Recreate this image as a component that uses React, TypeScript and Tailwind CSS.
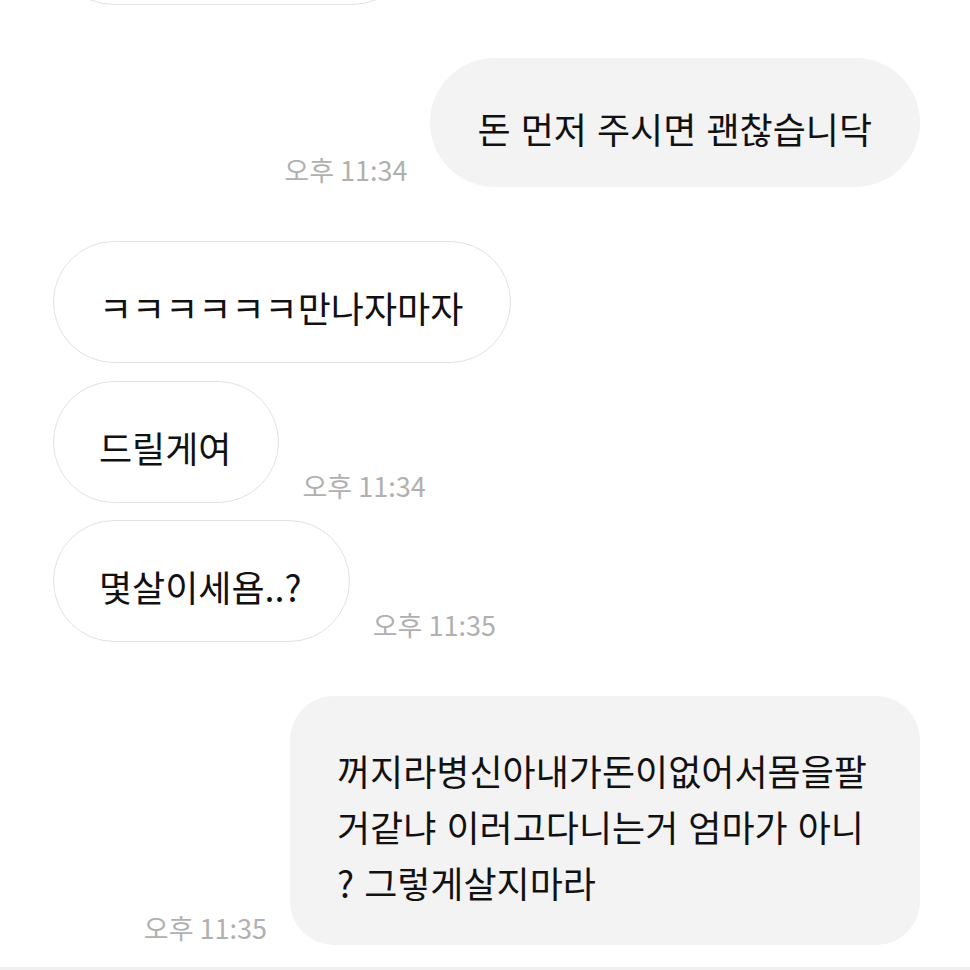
import React from 'react';

type Msg = {
  id: number;
  side: 'me' | 'them';
  lines: string[];
  time?: string;
  mt: string;
  w?: string;
};

const messages: Msg[] = [
  { id: 1, side: 'me', lines: ['돈 먼저 주시면 괜찮습니닥'], time: '오후 11:34', mt: 'mt-[53px]' },
  { id: 2, side: 'them', lines: ['ㅋㅋㅋㅋㅋㅋ만나자마자'], mt: 'mt-[54px]' },
  { id: 3, side: 'them', lines: ['드릴게여'], time: '오후 11:34', mt: 'mt-[18px]' },
  { id: 4, side: 'them', lines: ['몇살이세욤..?'], time: '오후 11:35', mt: 'mt-[17px]' },
  {
    id: 5,
    side: 'me',
    lines: ['꺼지라병신아내가돈이없어서몸을팔', '거같냐 이러고다니는거 엄마가 아니', '? 그렇게살지마라'],
    time: '오후 11:35',
    mt: 'mt-[54px]',
    w: 'w-[630px]',
  },
];

const Time: React.FC<{ text: string }> = ({ text }) => (
  <span className="mb-[4px] shrink-0 text-[27px] leading-none text-[#b0b0b0] whitespace-nowrap">{text}</span>
);

const App: React.FC = () => {
  return (
    <div className="flex min-h-[970px] w-[970px] flex-col overflow-hidden bg-white font-['Noto_Sans_CJK_KR','Noto_Sans',sans-serif] text-[#111]">
      {/* previous message, mostly scrolled off */}
      <div className="pl-[53px]">
        <div className="-mt-[117px] h-[122px] w-[360px] rounded-full border-[1.5px] border-[#e2e2e2]" />
      </div>

      {messages.map(m =>
        m.side === 'me' ? (
          <div key={m.id} className={`${m.mt} flex items-end justify-end gap-[23px] pr-[50px]`}>
            {m.time && <Time text={m.time} />}
            <div
              className={`${m.w ?? ''} ${
                m.lines.length > 1 ? 'rounded-[44px] pt-[46px] pb-[35px]' : 'rounded-full pt-[42px] pb-[31px]'
              } bg-[#f3f3f3] pl-[47px] pr-[48px] text-[36px] leading-[56px] [word-spacing:2px] whitespace-nowrap`}
            >
              {m.lines.map((l, i) => (
                <div key={i}>{l}</div>
              ))}
            </div>
          </div>
        ) : (
          <div key={m.id} className={`${m.mt} flex items-end gap-[23px] pl-[53px]`}>
            <div className="rounded-full border-[1.5px] border-[#e2e2e2] bg-white pt-[37px] pb-[27px] pl-[45px] pr-[47px] text-[36px] leading-[56px] whitespace-nowrap">
              {m.lines[0]}
            </div>
            {m.time && <Time text={m.time} />}
          </div>
        )
      )}

      <div className="mt-auto h-[3px] bg-[#f0f0f0]" />
    </div>
  );
};

export default App;
